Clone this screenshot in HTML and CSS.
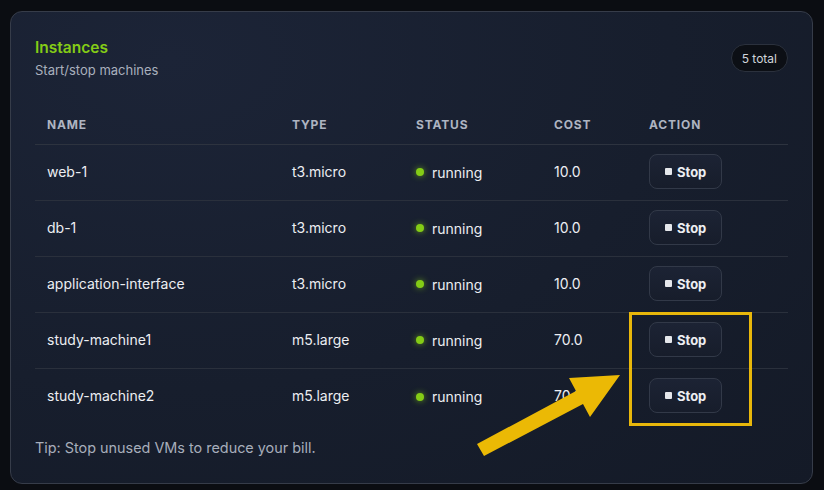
FILE: index.html
```html
<!DOCTYPE html>
<html lang="en">
<head>
<meta charset="utf-8">
<title>Instances</title>
<link rel="stylesheet" href="styles.css">
</head>
<body>
<div class="page">
  <section class="card">
    <header class="card-head">
      <div class="titles">
        <h2 class="title">Instances</h2>
        <p class="subtitle">Start/stop machines</p>
      </div>
      <span class="badge">5 total</span>
    </header>
    <table class="table">
      <colgroup>
        <col class="c-name"><col class="c-type"><col class="c-status"><col class="c-cost"><col class="c-action">
      </colgroup>
      <thead>
        <tr><th>Name</th><th>Type</th><th>Status</th><th>Cost</th><th>Action</th></tr>
      </thead>
      <tbody>
        <tr><td>web-1</td><td>t3.micro</td><td><span class="status"><span class="dot"></span>running</span></td><td>10.0</td><td><button class="btn"><span class="sq"></span>Stop</button></td></tr>
        <tr><td>db-1</td><td>t3.micro</td><td><span class="status"><span class="dot"></span>running</span></td><td>10.0</td><td><button class="btn"><span class="sq"></span>Stop</button></td></tr>
        <tr><td>application-interface</td><td>t3.micro</td><td><span class="status"><span class="dot"></span>running</span></td><td>10.0</td><td><button class="btn"><span class="sq"></span>Stop</button></td></tr>
        <tr><td>study-machine1</td><td>m5.large</td><td><span class="status"><span class="dot"></span>running</span></td><td>70.0</td><td><button class="btn"><span class="sq"></span>Stop</button></td></tr>
        <tr><td>study-machine2</td><td>m5.large</td><td><span class="status"><span class="dot"></span>running</span></td><td>70.0</td><td><button class="btn"><span class="sq"></span>Stop</button></td></tr>
      </tbody>
    </table>
    <p class="tip">Tip: Stop unused VMs to reduce your bill.</p>
  </section>
  <div class="highlight"></div>
  <svg class="arrow" width="824" height="490" viewBox="0 0 824 490" aria-hidden="true">
    <polygon points="477,444 576,391 569,378 620,375 590,417 583,404 484,456" fill="#ebb905"/>
  </svg>
</div>
</body>
</html>
```
FILE: styles.css
```css
* { box-sizing: border-box; }
html, body {
  margin: 0;
  padding: 0;
  background: #0b0d12;
}
body {
  font-family: Inter, "Noto Sans", "Liberation Sans", sans-serif;
  color: #e5e7eb;
  width: 824px;
  height: 490px;
  overflow: hidden;
}
.page {
  position: relative;
  padding: 11px 11px 0 10px;
  height: 490px;
}
.card {
  height: 473px;
  border: 1px solid #363c49;
  border-radius: 12px;
  background: radial-gradient(ellipse at 20% 10%, #1c2437 0%, #171e2d 55%, #141a27 100%);
  padding: 24px 24px 0 24px;
}
.card-head {
  display: flex;
  align-items: center;
  justify-content: space-between;
}
.title {
  margin: 0;
  font-size: 15.5px;
  line-height: 24px;
  font-weight: 600;
  color: #84cc16;
}
.subtitle {
  margin: 0;
  font-size: 13px;
  line-height: 20px;
  color: #a9b0bd;
}
.badge {
  display: inline-flex;
  align-items: center;
  height: 28px;
  padding: 0 10px;
  border-radius: 999px;
  background: #0c0f15;
  border: 1px solid #2b313d;
  font-size: 12px;
  color: #d1d5db;
}
.table {
  width: 100%;
  margin-top: 21px;
  border-collapse: collapse;
  table-layout: fixed;
}
.c-name { width: 245px; }
.c-type { width: 124px; }
.c-status { width: 138px; }
.c-cost { width: 95px; }
.c-action { width: 151px; }
th {
  height: 43px;
  padding: 4px 12px 0;
  text-align: left;
  font-size: 12px;
  font-weight: 700;
  letter-spacing: 0.07em;
  text-transform: uppercase;
  color: #aeb4c1;
  border-bottom: 1px solid #2d333f;
}
td {
  height: 56px;
  padding: 0 12px 1px;
  font-size: 14px;
  font-weight: 400;
  color: #eceef2;
  border-bottom: 1px solid #2a303c;
  white-space: nowrap;
}
tbody tr:last-child td { border-bottom: none; }
.status {
  display: inline-flex;
  align-items: center;
  gap: 8px;
}
.dot {
  width: 8px;
  height: 8px;
  border-radius: 50%;
  background: #84cc16;
  box-shadow: 0 0 6px rgba(132, 204, 22, 0.7);
}
.btn {
  display: inline-flex;
  align-items: center;
  gap: 5px;
  height: 35px;
  padding: 0 15px 0 15px;
  border: 1px solid #323948;
  border-radius: 8px;
  background: linear-gradient(#1c2334, #171d2b);
  font-family: inherit;
  font-size: 13px;
  font-weight: 700;
  color: #eceef2;
}
.sq {
  width: 7px;
  height: 7px;
  border-radius: 1px;
  background: #e5e7eb;
}
.tip {
  margin: 14px 0 0;
  font-size: 14.4px;
  line-height: 20px;
  color: #a7aebb;
}
.highlight {
  position: absolute;
  left: 629px;
  top: 312px;
  width: 123px;
  height: 114px;
  border: 3px solid #e8b70b;
}
.arrow {
  position: absolute;
  left: 0;
  top: 0;
}
```
